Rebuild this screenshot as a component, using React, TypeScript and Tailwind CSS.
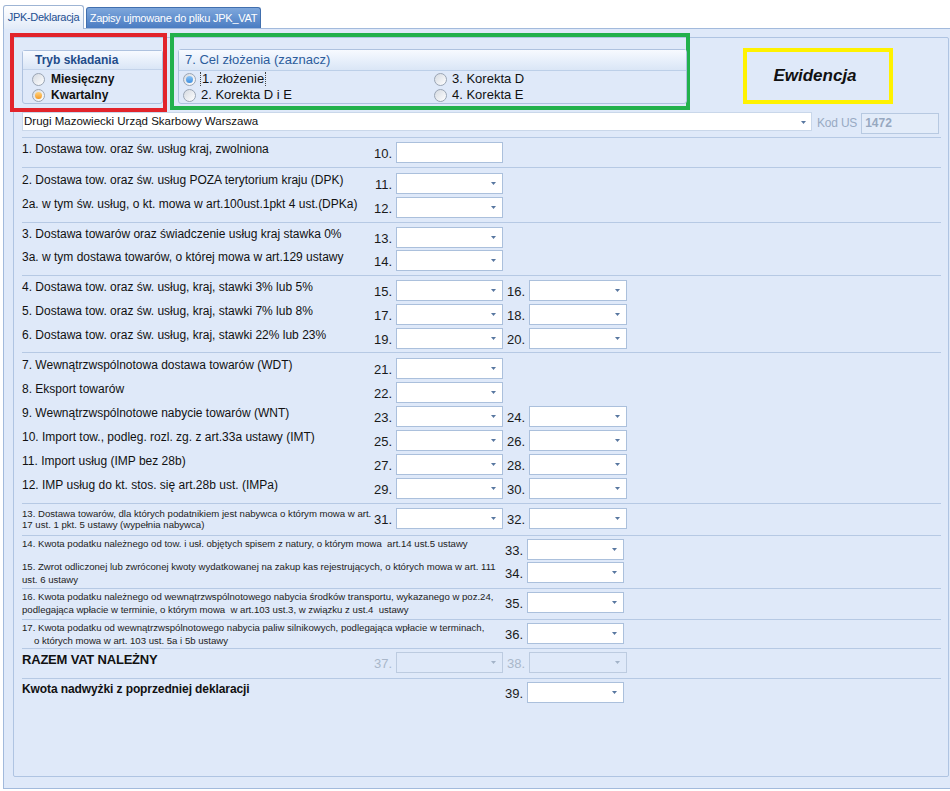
import React from 'react';

type RowDef = {
  label: React.ReactNode;
  lc?: string;
  n1?: string;
  n2?: string;
  plain?: boolean;
  wide?: boolean;
  dis?: boolean;
};

type SectionDef = { cls: string; rows: RowDef[]; last?: boolean };

const L = 'text-[12px] leading-[14px] text-[#111] whitespace-nowrap';
const S = 'text-[9.6px] leading-[13px] text-[#222] whitespace-pre -mt-[2px]';

function Field({ w, plain, dis }: { w: string; plain?: boolean; dis?: boolean }) {
  return (
    <div
      className={`${w} h-[21px] ml-[4px] relative shrink-0 border ${
        dis ? 'border-[#bccbe0] bg-[#dfe9f9]' : 'border-[#abc0dc] bg-white'
      }`}
    >
      {!plain && (
        <svg className="absolute right-[6px] top-[8px]" width="5" height="3" viewBox="0 0 5 3">
          <polygon points="0,0 5,0 2.5,3" fill={dis ? '#a3b3c8' : '#5877a0'} />
        </svg>
      )}
    </div>
  );
}

function Num({ n, dis, w }: { n?: string; dis?: boolean; w: string }) {
  return (
    <div
      className={`${w} shrink-0 text-right text-[13px] leading-[21px] pt-[1px] ${
        dis ? 'text-[#a9b7ca]' : 'text-[#1a1a1a]'
      }`}
    >
      {n}
    </div>
  );
}

function Row({ r }: { r: RowDef }) {
  if (r.wide) {
    return (
      <div className="flex h-[21px]">
        <div className={`w-[481px] shrink-0 ${r.lc ?? L}`}>{r.label}</div>
        <Num n={r.n2} w="w-[20px]" />
        <Field w="w-[97px]" />
      </div>
    );
  }
  return (
    <div className="flex h-[21px]">
      <div className={`w-[348px] shrink-0 ${r.lc ?? L}`}>{r.label}</div>
      <Num n={r.n1} dis={r.dis} w="w-[22px]" />
      <Field w="w-[107px]" plain={r.plain} dis={r.dis} />
      {r.n2 && (
        <>
          <Num n={r.n2} dis={r.dis} w="w-[22px]" />
          <Field w="w-[98px]" dis={r.dis} />
        </>
      )}
    </div>
  );
}

const sections: SectionDef[] = [
  {
    cls: 'pt-[4px] pb-[4px] gap-[3px]',
    rows: [{ label: '1. Dostawa tow. oraz św. usług kraj, zwolniona', n1: '10.', plain: true }],
  },
  {
    cls: 'pt-[5px] pb-[4px] gap-[3px]',
    rows: [
      { label: '2. Dostawa tow. oraz św. usług POZA terytorium kraju (DPK)', n1: '11.' },
      { label: '2a. w tym św. usług, o kt. mowa w art.100ust.1pkt 4 ust.(DPKa)', n1: '12.' },
    ],
  },
  {
    cls: 'pt-[4px] pb-[4px] gap-[2px]',
    rows: [
      { label: '3. Dostawa towarów oraz świadczenie usług kraj stawka 0%', n1: '13.' },
      { label: '3a. w tym dostawa towarów, o której mowa w art.129 ustawy', n1: '14.' },
    ],
  },
  {
    cls: 'pt-[4px] pb-[3px] gap-[3px]',
    rows: [
      { label: '4. Dostawa tow. oraz św. usług, kraj, stawki 3% lub 5%', n1: '15.', n2: '16.' },
      { label: '5. Dostawa tow. oraz św. usług, kraj, stawki 7% lub 8%', n1: '17.', n2: '18.' },
      { label: '6. Dostawa tow. oraz św. usług, kraj, stawki 22% lub 23%', n1: '19.', n2: '20.' },
    ],
  },
  {
    cls: 'pt-[5px] pb-[4px] gap-[3px]',
    rows: [
      { label: '7. Wewnątrzwspólnotowa dostawa towarów (WDT)', n1: '21.' },
      { label: '8. Eksport towarów', n1: '22.' },
      { label: '9. Wewnątrzwspólnotowe nabycie towarów (WNT)', n1: '23.', n2: '24.' },
      { label: '10. Import tow., podleg. rozl. zg. z art.33a ustawy (IMT)', n1: '25.', n2: '26.' },
      { label: '11. Import usług (IMP bez 28b)', n1: '27.', n2: '28.' },
      { label: '12. IMP usług do kt. stos. się art.28b ust. (IMPa)', n1: '29.', n2: '30.' },
    ],
  },
  {
    cls: 'pt-[4px] pb-[6px]',
    rows: [
      {
        label:
          '13. Dostawa towarów, dla których podatnikiem jest nabywca o którym mowa w art.\n17 ust. 1 pkt. 5 ustawy (wypełnia nabywca)',
        lc: 'text-[9.6px] leading-[11px] text-[#222] whitespace-pre',
        n1: '31.',
        n2: '32.',
      },
    ],
  },
  {
    cls: 'pt-[3px] pb-[5px] gap-[2px]',
    rows: [
      {
        label:
          '14. Kwota podatku należnego od tow. i usł. objętych spisem z natury, o którym mowa  art.14 ust.5 ustawy',
        lc: S,
        wide: true,
        n2: '33.',
      },
      {
        label:
          '15. Zwrot odliczonej lub zwróconej kwoty wydatkowanej na zakup kas rejestrujących, o których mowa w art. 111\nust. 6 ustawy',
        lc: S,
        wide: true,
        n2: '34.',
      },
    ],
  },
  {
    cls: 'pt-[3px] pb-[6px]',
    rows: [
      {
        label:
          '16. Kwota podatku należnego od wewnątrzwspólnotowego nabycia środków transportu, wykazanego w poz.24,\npodlegająca wpłacie w terminie, o którym mowa  w art.103 ust.3, w związku z ust.4  ustawy',
        lc: S,
        wide: true,
        n2: '35.',
      },
    ],
  },
  {
    cls: 'pt-[3px] pb-[4px]',
    rows: [
      {
        label: (
          <>
            17. Kwota podatku od wewnątrzwspólnotowego nabycia paliw silnikowych, podlegająca wpłacie w terminach,
            <span className="block pl-[12px]">o których mowa w art. 103 ust. 5a i 5b ustawy</span>
          </>
        ),
        lc: S,
        wide: true,
        n2: '36.',
      },
    ],
  },
  {
    cls: 'pt-[3px] pb-[5px]',
    rows: [
      {
        label: 'RAZEM VAT NALEŻNY',
        lc: 'text-[13px] leading-[16px] font-bold tracking-[-0.2px] text-[#111] whitespace-nowrap',
        n1: '37.',
        n2: '38.',
        dis: true,
      },
    ],
  },
  {
    cls: 'pt-[3px]',
    last: true,
    rows: [
      {
        label: 'Kwota nadwyżki z poprzedniej deklaracji',
        lc: 'text-[12px] leading-[14px] font-bold tracking-[-0.1px] text-[#111] whitespace-nowrap',
        wide: true,
        n2: '39.',
      },
    ],
  },
];

function Radio({ on, tone }: { on?: boolean; tone: 'blue' | 'orange' }) {
  return (
    <span className="w-[13px] h-[13px] shrink-0 rounded-full border border-[#9aa5b4] bg-gradient-to-br from-[#d5dae1] to-white flex items-center justify-center">
      {on && (
        <span
          className={
            tone === 'blue'
              ? 'w-[7px] h-[7px] rounded-full bg-gradient-to-b from-[#8cc4f4] to-[#3b8ee0]'
              : 'w-[7px] h-[7px] rounded-full bg-gradient-to-b from-[#ffd27a] to-[#f29a1e]'
          }
        />
      )}
    </span>
  );
}

export default function App() {
  return (
    <div className="w-[950px] h-[791px] bg-white overflow-hidden font-['Liberation_Sans',Arial,sans-serif]">
      {/* tabs */}
      <div className="flex items-end h-[28px] pl-[3px] gap-[2px]">
        <div className="relative z-10 -mb-[1px] h-[24px] w-[81px] border border-b-0 border-[#9db4d4] rounded-t-[3px] bg-gradient-to-b from-white to-[#e2ebf8] flex items-center justify-center whitespace-nowrap text-[11px] tracking-[-0.3px] text-[#1d4f91]">
          JPK-Deklaracja
        </div>
        <div className="h-[21px] w-[175px] border border-b-0 border-[#416fae] rounded-t-[3px] bg-gradient-to-b from-[#7ea7dc] to-[#4a7cc2] flex items-center justify-center whitespace-nowrap text-[11px] tracking-[-0.25px] text-white">
          Zapisy ujmowane do pliku JPK_VAT
        </div>
      </div>

      {/* outer panel */}
      <div className="ml-[3px] w-[948px] h-[761px] border border-[#a2badc] bg-[#dfe9f9] pt-[8px] pl-[9px]">
        <div className="w-[936px] h-[740px] border border-[#afc4e2] rounded-[2px] pl-[8px] pr-[7px]">
          {/* header */}
          <div className="flex -ml-[12px] -mt-[5px] h-[79px]">
            <div className="w-[157px] h-[79px] shrink-0 border-4 border-[#e2242b]">
              <div className="ml-[8px] mt-[13px] w-[141px] h-[54px] border border-[#aec2df] rounded-[3px]">
                <div className="h-[19px] bg-gradient-to-b from-[#f7faff] to-[#dae6f6] border-b border-[#c3d3ea] pl-[12px] text-[12px] leading-[18px] font-bold text-[#1f4c8a]">
                  Tryb składania
                </div>
                <div className="pl-[9px] pt-[1px]">
                  <div className="flex items-center h-[16px] gap-[6px]">
                    <Radio tone="orange" />
                    <span className="text-[12px] font-bold text-[#111]">Miesięczny</span>
                  </div>
                  <div className="flex items-center h-[16px] gap-[6px]">
                    <Radio tone="orange" on />
                    <span className="text-[12px] font-bold text-[#111]">Kwartalny</span>
                  </div>
                </div>
              </div>
            </div>

            <div className="ml-[3px] w-[520px] h-[77px] shrink-0 border-4 border-[#22b14c]">
              <div className="ml-[4px] mt-[12px] w-[509px] h-[55px] border border-[#aec2df] rounded-[3px]">
                <div className="h-[21px] bg-gradient-to-b from-[#f7faff] to-[#dae6f6] border-b border-[#bccfe8] pl-[6px] text-[13px] leading-[20px] text-[#2d5d9c]">
                  7. Cel złożenia (zaznacz)
                </div>
                <div className="grid grid-cols-[251px_1fr] pl-[4px] text-[13px] text-[#111]">
                  <div className="flex items-center h-[16px] gap-[4px]">
                    <Radio tone="blue" on />
                    <span className="border-l border-r border-dotted border-[#444] px-[1px] leading-[14px]">1. złożenie</span>
                  </div>
                  <div className="flex items-center h-[16px] gap-[5px]">
                    <Radio tone="blue" />
                    <span>3. Korekta D</span>
                  </div>
                  <div className="flex items-center h-[16px] gap-[5px]">
                    <Radio tone="blue" />
                    <span>2. Korekta D i E</span>
                  </div>
                  <div className="flex items-center h-[16px] gap-[5px]">
                    <Radio tone="blue" />
                    <span>4. Korekta E</span>
                  </div>
                </div>
              </div>
            </div>

            <div className="ml-[53px] mt-[15px] w-[150px] h-[56px] shrink-0 border-4 border-[#fff200] flex items-center justify-center">
              <span className="text-[17px] font-bold italic text-[#111] -ml-[6px]">Ewidencja</span>
            </div>
          </div>

          {/* urząd */}
          <div className="flex h-[22px] border-b border-[#b6c9e4] box-content pb-[3px]">
            <div className="w-[790px] h-[19px] relative bg-white border border-[#c9d7ea] pl-[1px] text-[11.5px] leading-[17px] text-[#111]">
              Drugi Mazowiecki Urząd Skarbowy Warszawa
              <svg className="absolute right-[5px] top-[8px]" width="5" height="3" viewBox="0 0 5 3">
                <polygon points="0,0 5,0 2.5,3" fill="#5877a0" />
              </svg>
            </div>
            <div className="ml-[5px] mt-[1px] text-[12px] leading-[21px] tracking-[-0.2px] text-[#98a9c3]">Kod US</div>
            <div className="ml-[4px] mt-[1px] w-[78px] h-[21px] border border-[#b7c9e1] bg-[#e3ecf9] pl-[3px] text-[12px] leading-[19px] font-bold text-[#97a8c0]">
              1472
            </div>
          </div>

          {/* rows */}
          {sections.map((s, i) => (
            <div
              key={i}
              className={`flex flex-col ${s.cls} ${s.last ? '' : 'border-b border-[#b6c9e4]'}`}
            >
              {s.rows.map((r, j) => (
                <Row key={j} r={r} />
              ))}
            </div>
          ))}
        </div>
      </div>
    </div>
  );
}
